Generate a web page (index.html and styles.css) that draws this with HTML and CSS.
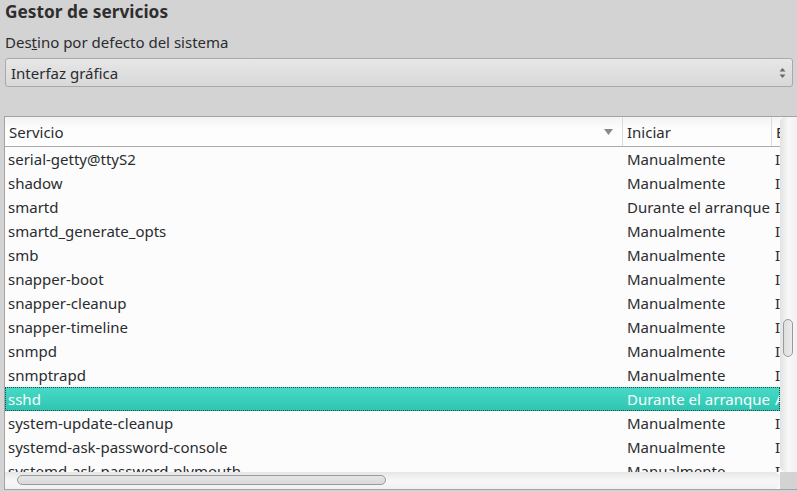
FILE: index.html
```html
<!DOCTYPE html>
<html lang="es">
<head>
<meta charset="utf-8">
<title>Gestor de servicios</title>
<link rel="stylesheet" href="styles.css">
</head>
<body>
<div class="page">
  <h1 class="title">Gestor de servicios</h1>
  <div class="label">Des<span class="mn">t</span>ino por defecto del sistema</div>
  <div class="combo">
    <span class="combo-text">Interfaz gráfica</span>
    <svg class="combo-arrows" width="7" height="12" viewBox="0 0 7 12"><path d="M0.5 4.5 L3.5 1 L6.5 4.5 Z" fill="#6a6a6a"/><path d="M0.5 7.5 L3.5 11 L6.5 7.5 Z" fill="#6a6a6a"/></svg>
  </div>
  <div class="table">
    <div class="main">
      <div class="head">
        <div class="hc c1">Servicio<svg class="sort" width="9" height="6" viewBox="0 0 9 6"><path d="M0 0 H9 L4.5 6 Z" fill="#8a8a8a"/></svg></div>
        <div class="hc c2">Iniciar</div>
        <div class="hc c3">Estado</div>
      </div>
      <div class="rows">
        <div class="row"><span class="c1">serial-getty@ttyS2</span><span class="c2">Manualmente</span><span class="c3">Inactivo</span></div>
        <div class="row"><span class="c1">shadow</span><span class="c2">Manualmente</span><span class="c3">Inactivo</span></div>
        <div class="row"><span class="c1">smartd</span><span class="c2">Durante el arranque</span><span class="c3">Inactivo</span></div>
        <div class="row"><span class="c1">smartd_generate_opts</span><span class="c2">Manualmente</span><span class="c3">Inactivo</span></div>
        <div class="row"><span class="c1">smb</span><span class="c2">Manualmente</span><span class="c3">Inactivo</span></div>
        <div class="row"><span class="c1">snapper-boot</span><span class="c2">Manualmente</span><span class="c3">Inactivo</span></div>
        <div class="row"><span class="c1">snapper-cleanup</span><span class="c2">Manualmente</span><span class="c3">Inactivo</span></div>
        <div class="row"><span class="c1">snapper-timeline</span><span class="c2">Manualmente</span><span class="c3">Inactivo</span></div>
        <div class="row"><span class="c1">snmpd</span><span class="c2">Manualmente</span><span class="c3">Inactivo</span></div>
        <div class="row"><span class="c1">snmptrapd</span><span class="c2">Manualmente</span><span class="c3">Inactivo</span></div>
        <div class="row sel"><span class="c1">sshd</span><span class="c2">Durante el arranque</span><span class="c3">Activo</span></div>
        <div class="row"><span class="c1">system-update-cleanup</span><span class="c2">Manualmente</span><span class="c3">Inactivo</span></div>
        <div class="row"><span class="c1">systemd-ask-password-console</span><span class="c2">Manualmente</span><span class="c3">Inactivo</span></div>
        <div class="row"><span class="c1">systemd-ask-password-plymouth</span><span class="c2">Manualmente</span><span class="c3">Inactivo</span></div>
      </div>
    </div>
    <div class="vscroll"><div class="vhandle"></div></div>
    <div class="hscroll"><div class="hhandle"></div></div>
    <div class="corner"></div>
  </div>
</div>
</body>
</html>
```
FILE: styles.css
```css
html, body {
  margin: 0;
  padding: 0;
  background: #d3d3d3;
  overflow: hidden;
  width: 797px;
  height: 492px;
}
.page {
  font-family: "Noto Sans", "Open Sans", sans-serif;
  color: #2a2c30;
  padding: 0 0 0 4px;
  display: flex;
  flex-direction: column;
  height: 492px;
  box-sizing: border-box;
}
.title {
  margin: 0;
  font-size: 17.3px;
  font-weight: bold;
  line-height: 24px;
  padding-left: 1px;
  color: #2e2e2e;
}
.label {
  margin-top: 8px;
  font-size: 15px;
  line-height: 20px;
  padding-left: 1px;
}
.mn {
  text-decoration: underline;
}
.combo {
  margin-top: 6px;
  margin-left: 1px;
  width: 788px;
  height: 29px;
  box-sizing: border-box;
  border: 1px solid #a9a9a9;
  border-radius: 3px;
  background: linear-gradient(#e7e7e7, #d8d8d8);
  display: flex;
  align-items: center;
  justify-content: space-between;
  padding: 0 6px 0 5px;
  font-size: 15px;
}
.combo-arrows {
  display: block;
}
.table {
  margin-top: 29px;
  height: 372px;
  border: 1px solid #a3a3a3;
  border-right: none;
  background: #fcfcfc;
  display: grid;
  grid-template-columns: 1fr 17px;
  grid-template-rows: 1fr 17px;
  overflow: hidden;
}
.main {
  overflow: hidden;
  min-width: 0;
  font-size: 15px;
}
.head {
  display: flex;
  height: 29px;
  border-bottom: 1px solid #ababab;
  background: linear-gradient(#f3f3f3, #fdfdfd 40%, #fdfdfd);
  white-space: nowrap;
}
.hc {
  display: flex;
  align-items: center;
  padding-left: 4px;
  box-sizing: border-box;
  flex: none;
}
.head .c1 {
  justify-content: space-between;
  padding-right: 9px;
}
.head .c1, .head .c2 {
  border-right: 1px solid #dcdcdc;
}
.c1 { width: 618px; }
.c2 { width: 149px; }
.c3 { width: 120px; }
.sort { display: block; }
.rows {
  white-space: nowrap;
}
.row {
  display: flex;
  height: 24px;
  align-items: center;
  box-sizing: border-box;
}
.row span {
  flex: none;
  padding-left: 3px;
  box-sizing: border-box;
  overflow: hidden;
}
.row .c2 { padding-left: 4px; }
.row.sel {
  background: linear-gradient(#46dac7, #2fc5b1);
  color: #fbfefd;
  outline: 1px dotted #1d4e47;
  outline-offset: -1px;
}
.vscroll {
  grid-column: 2;
  grid-row: 1;
  background: linear-gradient(90deg, #e2e2e2, #f8f8f8 50%, #f1f1f1);
  border-radius: 5px 0 0 6px;
  position: relative;
}
.vhandle {
  position: absolute;
  left: 3px;
  top: 202px;
  width: 10px;
  height: 38px;
  box-sizing: border-box;
  border: 1px solid #999;
  border-radius: 5px;
  background: linear-gradient(90deg, #dedede, #ececec);
}
.hscroll {
  grid-column: 1;
  grid-row: 2;
  background: linear-gradient(#e6e6e6, #f7f7f7 50%, #f1f1f1);
  border-radius: 0 6px 6px 0;
  position: relative;
}
.hhandle {
  position: absolute;
  left: 12px;
  top: 3px;
  width: 369px;
  height: 10px;
  box-sizing: border-box;
  border: 1px solid #999;
  border-radius: 5px;
  background: linear-gradient(#e6e6e6, #d9d9d9);
}
.corner {
  grid-column: 2;
  grid-row: 2;
  background: #d3d3d3;
}
```
